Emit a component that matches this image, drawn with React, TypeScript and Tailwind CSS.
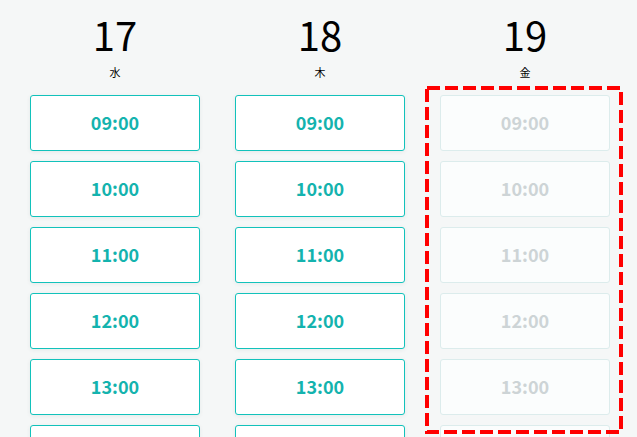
import React from 'react';

const days = [
  { date: '17', weekday: '水', available: true },
  { date: '18', weekday: '木', available: true },
  { date: '19', weekday: '金', available: false },
];

const times = ['09:00', '10:00', '11:00', '12:00', '13:00', '14:00'];

const font = { fontFamily: '"Noto Sans CJK JP", "Noto Sans", sans-serif' };

function Slot({ time, available }: { time: string; available: boolean }) {
  return (
    <button
      disabled={!available}
      className={
        available
          ? 'h-[56px] w-full rounded-[3px] border border-[#12c2bb] bg-white pb-[2px] text-[18px] font-bold text-[#14b3ae] shadow-[0_1px_4px_rgba(0,60,60,0.07)]'
          : 'h-[56px] w-full rounded-[3px] border border-[#dcecec] bg-[#fbfdfd] pb-[2px] text-[18px] font-bold text-[#cdd4d6]'
      }
    >
      {time}
    </button>
  );
}

// annotation frame drawn around the unavailable day
function DashedFrame() {
  return (
    <svg
      className="pointer-events-none absolute -left-[15px] top-[72px]"
      width="198"
      height="348"
      viewBox="0 0 198 348"
    >
      <rect x="2" y="2" width="194" height="344" fill="none" stroke="#ff0000" strokeWidth="4" strokeDasharray="13 5" />
    </svg>
  );
}

export default function App() {
  return (
    <div className="h-[437px] w-[637px] overflow-hidden bg-[#f5f7f7]" style={font}>
      <div className="grid grid-cols-[170px_170px_170px] gap-x-[35px] pl-[30px] pt-[14px]">
        {days.map(d => (
          <div key={d.date} className="relative flex flex-col items-center">
            <div className="text-[40px] leading-[40px] text-black">{d.date}</div>
            <div className="mt-[13px] text-[11px] leading-[11px] text-black">{d.weekday}</div>
            <div className="mt-[17px] flex w-full flex-col gap-[10px]">
              {times.map(t => (
                <Slot key={t} time={t} available={d.available} />
              ))}
            </div>
            {!d.available && <DashedFrame />}
          </div>
        ))}
      </div>
    </div>
  );
}
